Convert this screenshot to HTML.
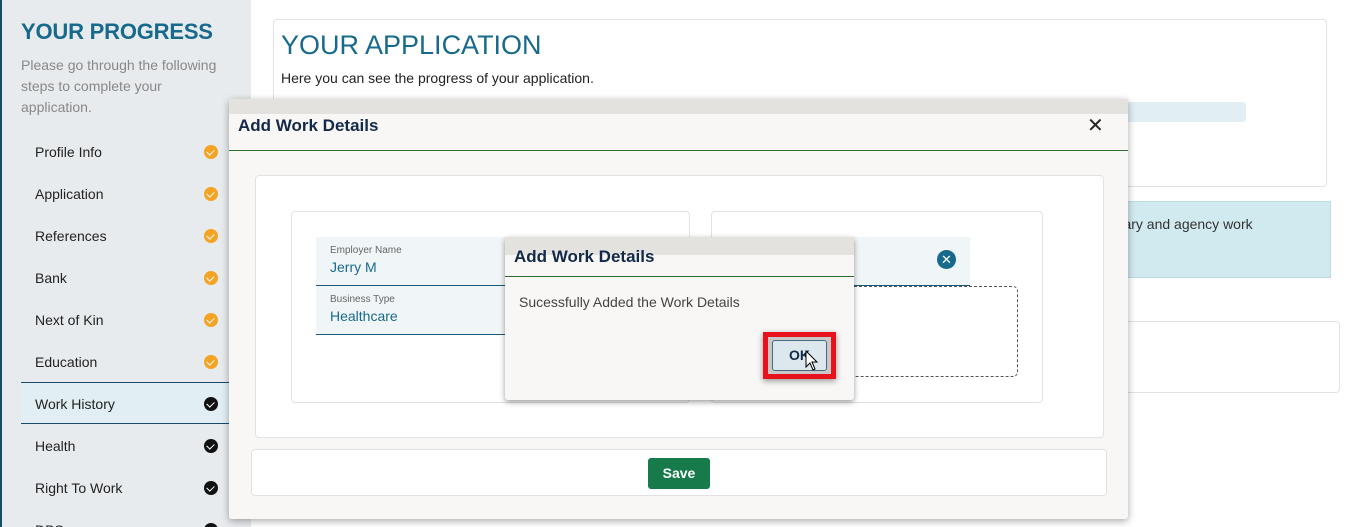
<!DOCTYPE html>
<html style="width:1356px;height:527px;overflow:hidden"><head><meta charset="utf-8"><style>
*{box-sizing:border-box;margin:0;padding:0}
body{width:1356px;height:527px;overflow:hidden;position:relative;background:#fff;font-family:"Liberation Sans","DejaVu Sans",sans-serif}
.a{position:absolute}
#side{left:0;top:0;width:251px;height:527px;background:#e8ebee;border-left:2px solid #1a4a6a;overflow:hidden}
.item{position:absolute;left:19px;width:208px;height:42px;font-size:14px;color:#222;padding-left:14px;line-height:42px}
.chk{position:absolute;right:11px;top:14px;width:14px;height:14px;border-radius:50%;background:#f4a322}
.chk.b{background:#111}
.chk:after{content:"";position:absolute;left:4px;top:3px;width:4px;height:6px;border:solid #fff;border-width:0 1.6px 1.6px 0;transform:rotate(45deg)}
</style></head><body>
<div id="side" class="a">
<div class="a" style="left:19px;top:19px;font-size:22px;font-weight:bold;color:#176a8c;letter-spacing:-0.2px">YOUR PROGRESS</div>
<div class="a" style="left:19px;top:55px;width:210px;font-size:14px;line-height:21px;color:#888">Please go through the following steps to complete your application.</div>
<div class="item" style="top:131px">Profile Info<span class="chk"></span></div>
<div class="item" style="top:173px">Application<span class="chk"></span></div>
<div class="item" style="top:215px">References<span class="chk"></span></div>
<div class="item" style="top:257px">Bank<span class="chk"></span></div>
<div class="item" style="top:299px">Next of Kin<span class="chk"></span></div>
<div class="item" style="top:341px">Education<span class="chk"></span></div>
<div class="item" style="top:382px;background:#e1eff5;border-top:1px solid #1a4a6a;border-bottom:1px solid #1a4a6a;">Work History<span class="chk b"></span></div>
<div class="item" style="top:425px">Health<span class="chk b"></span></div>
<div class="item" style="top:467px">Right To Work<span class="chk b"></span></div>
<div class="item" style="top:509px">DBS<span class="chk b"></span></div>
</div>
<div class="a" style="left:273px;top:19px;width:1054px;height:168px;border:1px solid #e2e2e2;border-radius:4px"></div>
<div class="a" style="left:281px;top:30px;font-size:27px;color:#176a8c">YOUR APPLICATION</div>
<div class="a" style="left:281px;top:70px;font-size:14px;color:#222">Here you can see the progress of your application.</div>
<div class="a" style="left:1100px;top:102px;width:146px;height:20px;background:#e1eff5;border-radius:3px"></div>
<div class="a" style="left:1100px;top:201px;width:231px;height:77px;background:#d1eaf0;border:1px solid #bcdce4;font-size:14px;color:#333;padding:14px 0 0 10px">brary and agency work</div>
<div class="a" style="left:1100px;top:321px;width:240px;height:72px;border:1px solid #e2e2e2;border-radius:4px"></div>

<div class="a" style="left:229px;top:99px;width:899px;height:420px;background:#f8f7f5;box-shadow:0 2px 8px rgba(0,0,0,.35);border-radius:3px">
 <div class="a" style="left:0;top:0;width:899px;height:15px;background:#e4e2de"></div>
 <div class="a" style="left:9px;top:17px;font-size:17px;font-weight:bold;color:#12294a">Add Work Details</div>
 <div class="a" style="left:858px;top:14px;font-size:20px;color:#222">✕</div>
 <div class="a" style="left:0;top:51px;width:899px;height:1px;background:#2c6e2c"></div>
 <div class="a" style="left:26px;top:76px;width:849px;height:263px;background:#fff;border:1px solid #e2e2e2;border-radius:4px"></div>
 <div class="a" style="left:62px;top:112px;width:399px;height:192px;border:1px solid #e2e2e2;border-radius:4px"></div>
 <div class="a" style="left:482px;top:112px;width:332px;height:192px;border:1px solid #e2e2e2;border-radius:4px"></div>
 <div class="a" style="left:87px;top:138px;width:200px;height:49px;background:#f0f5f8;border-bottom:1px solid #1a5a7a"><div style="font-size:10px;color:#666;padding:8px 0 0 14px">Employer Name</div><div style="font-size:14px;color:#176a8c;padding:3px 0 0 14px">Jerry M</div></div>
 <div class="a" style="left:87px;top:187px;width:200px;height:49px;background:#f0f5f8;border-bottom:1px solid #1a5a7a"><div style="font-size:10px;color:#666;padding:8px 0 0 14px">Business Type</div><div style="font-size:14px;color:#176a8c;padding:3px 0 0 14px">Healthcare</div></div>
 <div class="a" style="left:620px;top:138px;width:121px;height:49px;background:#f0f5f8;border-bottom:1px solid #1a5a7a"></div>
 <div class="a" style="left:708px;top:151px;width:19px;height:19px;border-radius:50%;background:#176a8c;color:#fff;font-size:13px;font-weight:bold;text-align:center;line-height:19px">✕</div>
 <div class="a" style="left:620px;top:187px;width:169px;height:91px;border:1px dashed #555;border-radius:5px"></div>
 <div class="a" style="left:22px;top:350px;width:856px;height:47px;background:#fff;border:1px solid #e2e2e2;border-radius:4px"></div>
 <div class="a" style="left:419px;top:359px;width:62px;height:31px;background:#167a4a;border-radius:3px;color:#fff;font-size:14px;font-weight:bold;text-align:center;line-height:31px">Save</div>
</div>

<div class="a" style="left:505px;top:237px;width:349px;height:163px;background:#f8f7f5;box-shadow:0 2px 6px rgba(0,0,0,.4);border-radius:3px">
 <div class="a" style="left:0;top:0;width:349px;height:18px;background:#e4e2de"></div>
 <div class="a" style="left:9px;top:10px;font-size:17px;font-weight:bold;color:#12294a">Add Work Details</div>
 <div class="a" style="left:0;top:39px;width:349px;height:1px;background:#2c6e2c"></div>
 <div class="a" style="left:14px;top:57px;font-size:14px;color:#444">Sucessfully Added the Work Details</div>
 <div class="a" style="left:258px;top:95px;width:73px;height:47px;background:#e8121c;box-shadow:0 2px 6px rgba(0,0,0,.4)"></div>
 <div class="a" style="left:263px;top:100px;width:63px;height:37px;background:#c8c8c8"></div>
 <div class="a" style="left:267px;top:103px;width:55px;height:31px;background:#dce8ee;border:1px solid #4a6a80;border-radius:3px;font-size:14px;font-weight:bold;color:#12294a;text-align:center;line-height:29px">OK</div>
 <svg class="a" style="left:300px;top:113px" width="14" height="22" viewBox="0 0 14 22"><path d="M1 1 L1 17 L5 13 L8 20 L10 19 L7 12 L12 12 Z" fill="#fff" stroke="#000" stroke-width="1"/></svg>
</div>
</body></html>
